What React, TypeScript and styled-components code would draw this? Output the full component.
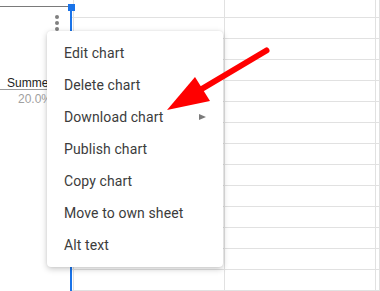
import React from "react";
import styled, { createGlobalStyle } from "styled-components";

const Global = createGlobalStyle`
  html, body { margin: 0; padding: 0; background: #fff; overflow: hidden; }
  body { width: 380px; height: 291px; font-family: Roboto, "Liberation Sans", Arial, sans-serif; }
`;

const Page = styled.div`
  position: relative;
  width: 380px;
  height: 291px;
  overflow: hidden;
`;

const Sheet = styled.div`
  display: grid;
  grid-template-columns: 74px 151px 151px 1fr;
  grid-template-rows: 18px repeat(13, 21px);
`;

const Cell = styled.div`
  box-sizing: border-box;
  border-right: 1px solid #e1e1e1;
  border-bottom: 1px solid #e1e1e1;
`;

const Chart = styled.div`
  position: absolute;
  left: 0;
  top: 6px;
  width: 72px;
  height: 300px;
  box-sizing: border-box;
  background: #fff;
  border-top: 1px solid #7a7a7a;
  border-right: 2px solid #1a73e8;
  display: flex;
  flex-direction: column;
`;

const Handle = styled.div`
  position: absolute;
  right: -5px;
  top: -3px;
  width: 7px;
  height: 7px;
  background: #1a73e8;
`;

const Kebab = styled.div`
  align-self: flex-end;
  margin: 8px 11px 0 0;
  display: flex;
  flex-direction: column;
  gap: 2px;
`;

const Dot = styled.span`
  width: 4px;
  height: 4px;
  border-radius: 50%;
  background: #808080;
`;

const LegendLabel = styled.div`
  margin-top: 47px;
  padding-left: 7px;
  font-family: "Liberation Sans", Arial, sans-serif;
  font-size: 12px;
  line-height: 11px;
  color: #222;
  white-space: nowrap;
  border-bottom: 1px solid #9a9a9a;
`;

const LegendValue = styled.div`
  margin-top: 3px;
  padding-left: 18px;
  font-family: "Liberation Sans", Arial, sans-serif;
  font-size: 12px;
  line-height: 13px;
  color: #a0a0a0;
  white-space: nowrap;
`;

const Menu = styled.div`
  position: absolute;
  left: 47px;
  top: 31px;
  width: 176px;
  padding: 6px 0;
  background: #fff;
  border-radius: 4px;
  box-shadow: 0 2px 6px rgba(0, 0, 0, 0.22), 0 0 2px rgba(0, 0, 0, 0.08);
  display: flex;
  flex-direction: column;
`;

const Item = styled.div`
  height: 32px;
  padding: 0 17px;
  display: flex;
  align-items: center;
  justify-content: space-between;
  font-size: 14px;
  color: #3c3c3c;
  letter-spacing: 0.1px;
`;

const SubArrow = styled.span`
  width: 0;
  height: 0;
  border-top: 3.5px solid transparent;
  border-bottom: 3.5px solid transparent;
  border-left: 7px solid #7a7a7a;
`;

const Annotation = styled.svg`
  position: absolute;
  left: 0;
  top: 0;
  pointer-events: none;
`;

const items: { label: string; sub?: boolean }[] = [
  { label: "Edit chart" },
  { label: "Delete chart" },
  { label: "Download chart", sub: true },
  { label: "Publish chart" },
  { label: "Copy chart" },
  { label: "Move to own sheet" },
  { label: "Alt text" },
];

export default function App() {
  const cells = Array.from({ length: 14 * 4 }, (_, i) => i);
  return (
    <Page>
      <Global />
      <Sheet>
        {cells.map((i) => (
          <Cell key={i} />
        ))}
      </Sheet>
      <Chart>
        <Handle />
        <Kebab>
          <Dot />
          <Dot />
          <Dot />
        </Kebab>
        <LegendLabel>Summer</LegendLabel>
        <LegendValue>20.0%</LegendValue>
      </Chart>
      <Menu>
        {items.map((it) => (
          <Item key={it.label}>
            <span>{it.label}</span>
            {it.sub && <SubArrow />}
          </Item>
        ))}
      </Menu>
      <Annotation width="380" height="291" viewBox="0 0 380 291">
        <line x1="266.5" y1="50.5" x2="200" y2="90" stroke="#ff0000" strokeWidth="6" strokeLinecap="round" />
        <polygon points="167,110 195,77 210,101" fill="#ff0000" />
      </Annotation>
    </Page>
  );
}
